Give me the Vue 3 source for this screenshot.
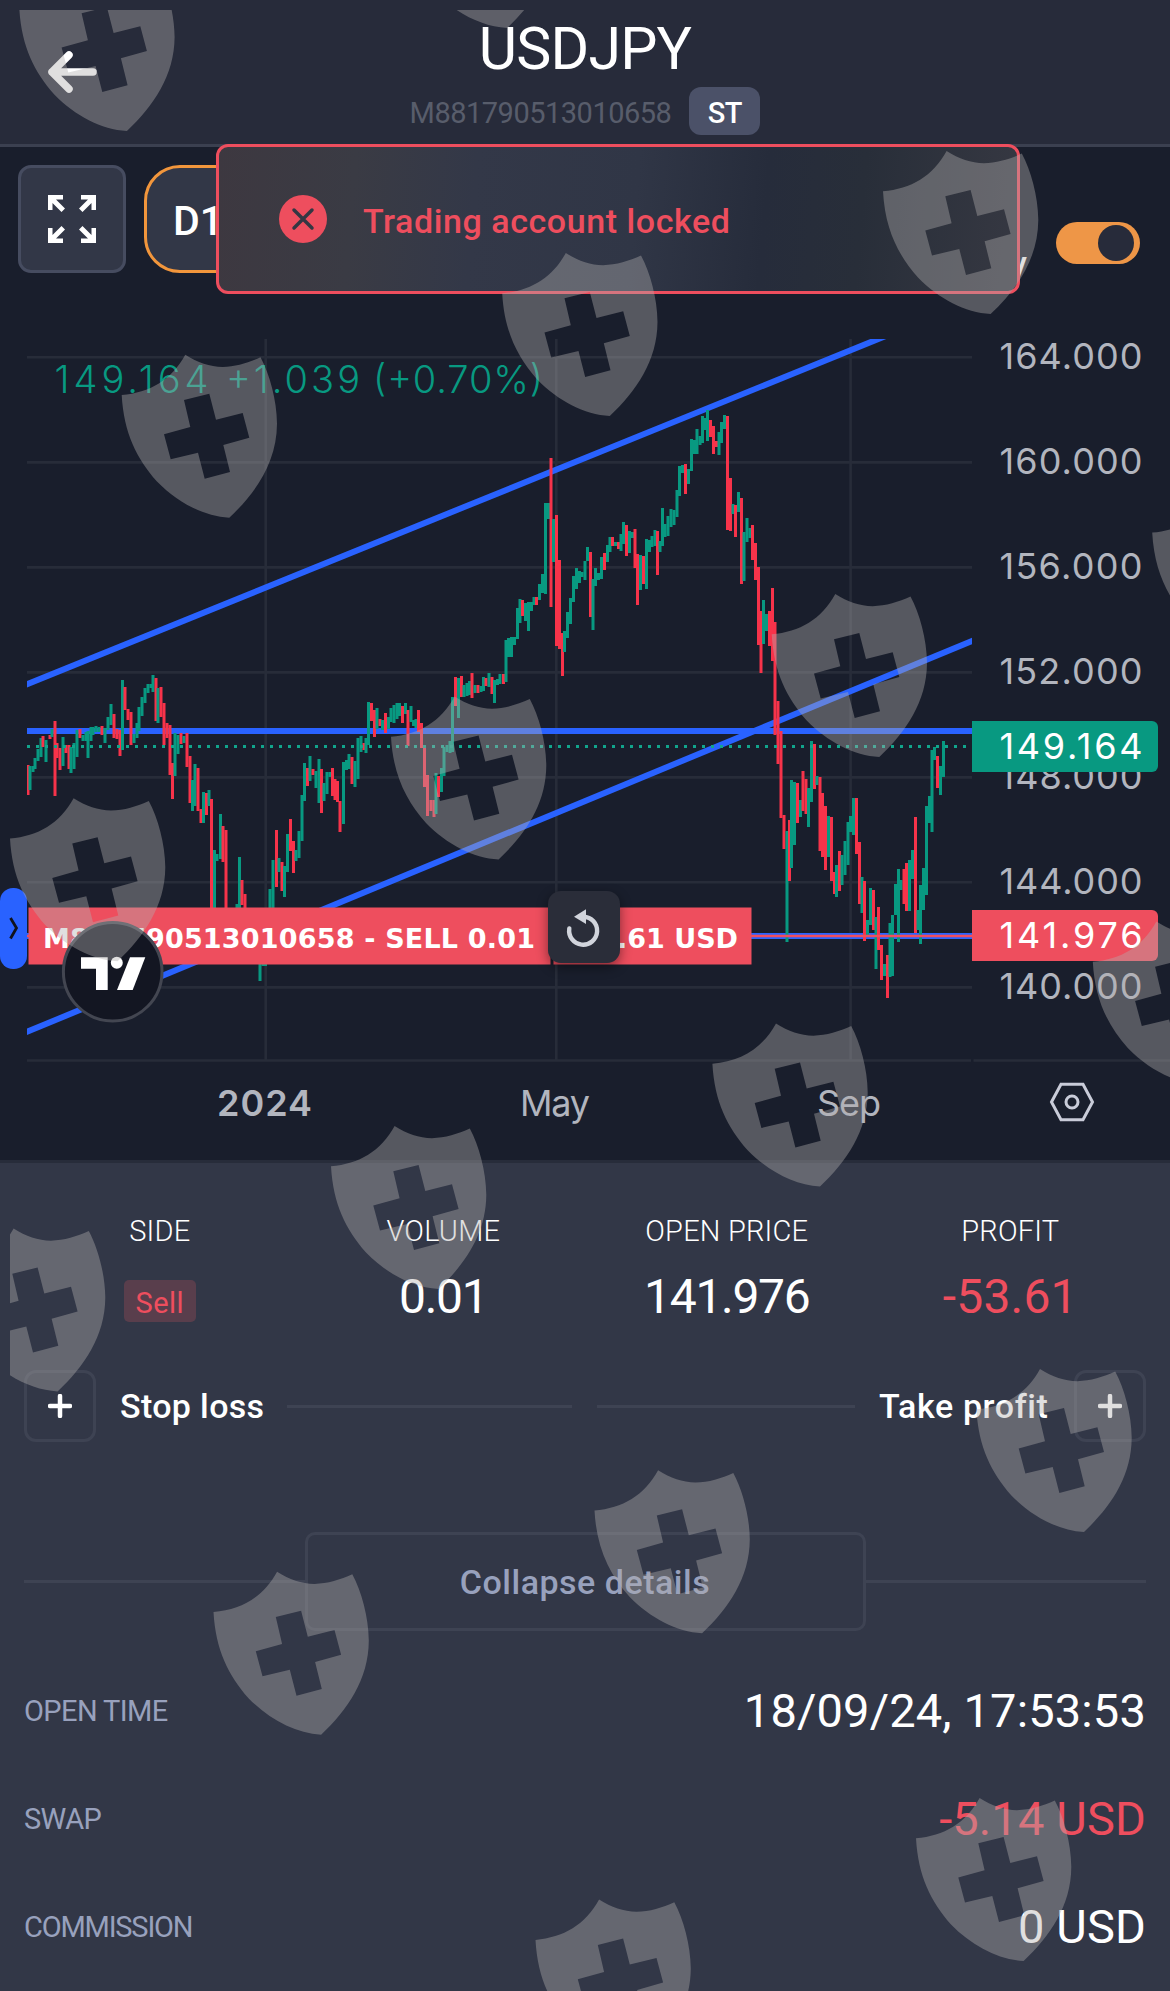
<template>
  <div class="screen">
    <header class="header">
      <svg class="back" width="56" height="48" viewBox="0 0 56 48">
        <path d="M25 7 L8 24 L25 41 M8 24 H49" />
      </svg>
      <h1 class="symbol">{{ position.symbol }}</h1>
      <div class="account">
        <span class="account-id">{{ position.account }}</span>
        <span class="account-type">ST</span>
      </div>
    </header>

    <div class="toolbar">
      <button class="btn-full">
        <svg width="48" height="48" viewBox="0 0 48 48">
          <g v-for="angle in [0, 90, 180, 270]" :key="angle" :transform="`rotate(${angle} 24 24)`">
            <path d="M0 0 H15 V4.5 H8 L17 13.5 L13.5 17 L4.5 8 V15 H0 Z" />
          </g>
        </svg>
      </button>
      <button class="btn-period">D1</button>
      <div class="history">
        <span class="history-label">y</span>
        <span class="toggle"><span class="knob"></span></span>
      </div>
    </div>

    <div class="toast">
      <svg width="48" height="48" viewBox="0 0 48 48">
        <circle cx="24" cy="24" r="24" fill="#ee4e5e" />
        <path d="M15 15 L33 33 M33 15 L15 33" stroke="#343743" stroke-width="3.5" stroke-linecap="round" />
      </svg>
      <span class="toast-text">Trading account locked</span>
    </div>

    <svg class="chart" width="1170" height="840" viewBox="0 320 1170 840">
      <g class="grid">
        <line v-for="t in ticks" :key="t.label" x1="27" x2="972" :y1="t.y" :y2="t.y" />
        <line v-for="m in months" :key="m.label" :x1="m.x" :x2="m.x" y1="339" y2="1060" />
        <line x1="27" x2="971" y1="1060.5" y2="1060.5" />
        <line x1="973.5" x2="1170" y1="1060.5" y2="1060.5" />
      </g>

      <clipPath id="pane"><rect x="27" y="339" width="945" height="721" /></clipPath>
      <g clip-path="url(#pane)">
        <g class="trend">
          <line x1="20" y1="687.2" x2="900" y2="330.2" />
          <line x1="20" y1="1034.7" x2="980" y2="637.7" />
          <line x1="27" y1="731" x2="972" y2="731" />
          <line x1="27" y1="936" x2="972" y2="936" />
        </g>
        <rect
          v-for="(c, i) in candles"
          :key="i"
          :x="c.x - 1.5"
          :y="c.top"
          width="3"
          :height="c.bottom - c.top"
          :fill="c.up ? '#089981' : '#f7334a'"
        />
        <line x1="27" y1="746.5" x2="972" y2="746.5" stroke="#11a58c" stroke-width="3" stroke-dasharray="3 6" />
        <line x1="27" y1="936" x2="972" y2="936" stroke="#ee4e5e" stroke-width="2.6" />
      </g>

      <g class="quote">
        <text x="54.5" y="392.7" textLength="154">149.164</text>
        <text x="226" y="392.7" textLength="134">+1.039</text>
        <text x="373" y="392.7" textLength="170">(+0.70%)</text>
      </g>

      <g class="axis">
        <text v-for="t in ticks" :key="t.label" x="999.5" :y="t.y + 12" textLength="143">{{ t.label }}</text>
        <text v-for="m in months" :key="m.label" :x="m.from" y="1116" :textLength="m.width" :class="{ year: m.year }">{{ m.label }}</text>
      </g>

      <path d="M972 721 H1152 a6 6 0 0 1 6 6 V766 a6 6 0 0 1 -6 6 H972 Z" fill="#089981" />
      <path d="M972 910 H1152 a6 6 0 0 1 6 6 V955 a6 6 0 0 1 -6 6 H972 Z" fill="#ee4e5e" />
      <text class="tag" x="999.5" y="759.3" textLength="143">149.164</text>
      <text class="tag" x="999.5" y="948.3" textLength="143">{{ position.openPrice }}</text>

      <!-- open position line -->
      <rect x="28.5" y="907.5" width="522" height="57" fill="#ee4e5e" />
      <rect x="553.5" y="907.5" width="198" height="57" fill="#ee4e5e" />
      <text class="order" x="43" y="947.5" textLength="492">{{ position.account }} - SELL 0.01</text>
      <text class="order" x="738" y="947.5" text-anchor="end">-53.61 USD</text>

      <!-- drawer handle -->
      <rect x="0" y="888" width="27" height="81" rx="13" fill="#2962ff" />
      <path d="M10.5 918 L16.5 928 L10.5 938.5" fill="none" stroke="#10131c" stroke-width="2.8" />

      <!-- TradingView badge -->
      <circle cx="112.7" cy="971.7" r="49.3" fill="#131622" stroke="#434651" stroke-width="3" />
      <g fill="#fff">
        <path d="M81 957.3 H107.7 V990 H96 V968.7 H81 Z" />
        <circle cx="116.8" cy="962.8" r="6" />
        <path d="M130 957.3 H145.3 L132.7 990 H117 Z" />
      </g>

      <rect class="reset" x="548" y="891" width="72" height="72" rx="13" />
      <path d="M569.3 928.5 A14 14 0 1 0 583.5 916.7" fill="none" stroke="#d1d4dc" stroke-width="4.4" stroke-linecap="round" />
      <path d="M574 916.7 L586 909.3 V924 Z" fill="#d1d4dc" />

      <g fill="none" stroke="#c9ccd9" stroke-width="3">
        <path d="M1051.5 1102 L1061 1084.3 H1083 L1092.500 1102 L1083 1119.700 H1061 Z" />
        <circle cx="1072" cy="1102" r="6" />
      </g>
    </svg>

    <section class="panel">
      <div class="summary">
        <div class="cell">
          <span class="cell-label">SIDE</span>
          <span class="side">Sell</span>
        </div>
        <div class="cell">
          <span class="cell-label">VOLUME</span>
          <span class="cell-value">0.01</span>
        </div>
        <div class="cell">
          <span class="cell-label">OPEN PRICE</span>
          <span class="cell-value">{{ position.openPrice }}</span>
        </div>
        <div class="cell">
          <span class="cell-label">PROFIT</span>
          <span class="cell-value loss">-53.61</span>
        </div>
      </div>

      <div class="limits">
        <button class="btn-add">
          <svg width="24" height="24" viewBox="0 0 24 24"><path d="M12 2 V22 M2 12 H22" /></svg>
        </button>
        <span class="limit-text stop">Stop loss</span>
        <span class="rule rule-stop"></span>
        <span class="rule rule-take"></span>
        <span class="limit-text take">Take profit</span>
        <button class="btn-add">
          <svg width="24" height="24" viewBox="0 0 24 24"><path d="M12 2 V22 M2 12 H22" /></svg>
        </button>
      </div>

      <div class="collapse">
        <span class="rule"></span>
        <button class="btn-collapse">Collapse details</button>
        <span class="rule"></span>
      </div>

      <div v-for="row in details" :key="row.label" class="row">
        <span class="row-label" :class="row.label.toLowerCase().replace(' ', '-')">{{ row.label }}</span>
        <span class="row-value" :class="{ loss: row.loss }">{{ row.value }}</span>
      </div>
    </section>

    <svg class="watermark" width="1170" height="1991" viewBox="0 0 1170 1991">
      <clipPath id="watermark-area"><rect x="10" y="10" width="1160" height="1981" /></clipPath>
      <g clip-path="url(#watermark-area)">
        <path
          v-for="(s, i) in shields"
          :key="i"
          :transform="`translate(${s[0]} ${s[1]})`"
          fill-rule="evenodd"
          :d="shieldPath"
        />
      </g>
    </svg>
  </div>
</template>

<script setup>
const position = {
  symbol: 'USDJPY',
  account: 'M881790513010658',
  openPrice: '141.976',
};

const details = [
  { label: 'OPEN TIME', value: '18/09/24, 17:53:53' },
  { label: 'SWAP', value: '-5.14 USD', loss: true },
  { label: 'COMMISSION', value: '0 USD' },
];

const ticks = [
  { label: '164.000', y: 357.3 },
  { label: '160.000', y: 462.4 },
  { label: '156.000', y: 567.4 },
  { label: '152.000', y: 672.4 },
  { label: '148.000', y: 777.4 },
  { label: '144.000', y: 882.3 },
  { label: '140.000', y: 987.4 },
];

const months = [
  { label: '2024', x: 265.7, from: 217, width: 95, year: true },
  { label: 'May', x: 556.3, from: 520, width: 70 },
  { label: 'Sep', x: 850.6, from: 817, width: 64 },
];

// direction, x, high, low
const series = `
r 28 765 795,g 30 766 790,g 33 766 772,g 35 758 769,g 38 749 761,g 41 738 757,r 43 736 747,g 46 740 762,r 50 735 739,g 52 729 737,
r 55 721 796,r 57 743 758,r 60 748 770,g 63 737 766,r 66 745 753,r 69 745 769,g 71 747 773,g 74 743 769,g 77 730 757,r 80 729 738,
g 83 735 741,g 86 732 741,g 88 731 758,g 91 727 741,g 93 727 735,g 96 726 732,g 99 727 732,r 102 726 735,g 105 728 743,g 108 717 730,
g 111 704 725,r 114 714 738,r 117 729 739,r 120 730 756,g 122.5 680 750,r 125 687 710,r 128 709 720,r 131 712 745,g 134 734 743,
g 137 723 738,g 139 707 731,g 142 697 716,g 145 688 703,g 148 684 693,g 151 684 688,g 153 675 692,r 156 678 721,g 158 688 723,
r 161 687 717,r 164 703 745,r 167 723 738,r 170 725 775,r 172.5 763 799,g 175 733 776,g 178 735 754,r 181 733 744,g 184 736 743,
r 187 733 767,r 190 756 803,g 192.5 780 811,g 195 764 806,r 198 768 811,r 201 809 823,g 203.5 792 823,r 206.5 793 815,g 209 790 806,
r 211.5 799 910,g 214.5 850 935,g 217 854 861,g 220.5 814 859,r 223 826 862,r 226 830 925,g 237 904 930,g 239.5 857 930,r 242 880 905,
r 245 894 930,g 260 960 981,g 263 950 966,g 265.5 930 966,g 270 889 920,g 273 860 909,r 276.5 830 887,g 279 858 872,r 282 862 891,
g 284.5 866 897,g 287.5 834 872,r 290.5 819 851,r 293.5 841 873,g 296 850 861,g 299 831 858,g 302 795 841,g 304.5 763 801,
r 307.5 768 786,g 310 756 781,r 313 769 775,g 316 771 788,g 319 759 803,r 321.5 769 813,g 324 783 801,g 327 772 794,g 330 772 777,
r 332.5 768 796,r 335 779 800,r 337.5 781 802,r 340 801 832,g 343.5 762 824,g 346.5 760 770,g 349 754 769,r 352 757 784,g 355 761 787,
g 358 738 779,g 361 736 752,r 364 743 750,g 366 738 753,g 368.5 702 745,r 371.5 703 721,r 374.5 710 737,g 377 708 729,r 380 719 726,
g 382.5 720 730,r 385.5 713 733,g 388.5 717 729,g 391 708 722,g 394 705 723,g 397 703 719,g 399.5 703 716,r 402.5 706 723,
g 405.5 703 714,r 408 710 746,g 411 706 722,g 413.5 720 726,g 416 719 728,r 418.5 710 732,r 421.5 723 748,r 424.5 746 787,
r 427.5 775 816,r 431 800 811,r 434 800 817,g 436 773 814,r 438.5 776 797,g 441.5 768 792,g 444 747 776,g 447 745 752,g 450 741 753,
g 452.5 697 752,r 455.5 677 706,g 458.5 678 718,r 461.5 676 697,g 464 685 697,g 467 683 696,g 469.5 681 695,r 472 673 698,
g 475 685 693,r 478 685 693,g 481 686 692,g 483.5 677 691,r 486 678 686,g 489 673 687,r 492 677 694,g 494.5 680 703,g 497.5 679 685,
g 500 674 684,r 503.5 674 684,g 506 640 682,g 508.5 638 657,g 511.5 637 657,g 514.5 637 645,g 517.5 608 639,g 520 599 623,
r 522.5 600 616,g 525.5 603 621,g 528.5 602 631,g 531.5 602 611,g 534 597 605,r 536.5 597 605,g 539.5 584 600,g 542.5 574 593,
g 545.5 503 594,g 548.5 503 519,r 551 458 607,g 553.5 519 562,r 556.5 515 646,r 559.5 560 649,r 562.5 633 676,g 564.5 631 652,
g 567.5 612 638,g 570.5 598 624,g 573.5 576 602,g 576.5 568 589,g 579.5 571 583,g 582 572 577,g 585 561 580,g 587.5 547 561,
r 590.5 552 617,g 593 579 630,g 595.5 568 586,g 598.5 573 580,g 601.5 557 579,r 604.5 553 570,g 607.5 545 562,g 610 537 552,
r 612.5 537 546,g 615.5 542 546,r 618.5 542 549,g 621 534 551,g 623.5 522 544,r 626.5 525 556,g 629.5 531 553,g 632.5 532 538,
r 635 529 568,r 637.5 554 605,g 640.5 555 590,r 643.5 556 584,g 646.5 539 589,g 649.5 540 552,g 652 536 547,g 655 530 546,
r 657.5 531 575,g 660 541 552,g 662.5 508 546,g 665 524 537,g 668 516 536,g 671 509 527,g 674 510 525,g 677 490 517,
g 679.5 466 496,g 682.5 465 473,r 685.5 464 494,g 688.5 469 484,g 691.5 439 471,g 694.5 440 454,g 697 429 454,g 700 436 445,
g 702.5 416 443,g 705 418 430,g 707.5 410 441,r 710.5 420 437,r 713.5 426 454,r 716.5 441 447,g 719 432 455,g 721.5 422 443,
g 724.5 415 429,r 727.5 416 530,r 730.5 478 531,g 733 504 514,r 735.5 505 537,g 738.5 492 512,r 741.5 498 584,g 744 532 581,
g 747 518 542,g 750 528 538,r 752.5 525 560,r 755.5 543 580,r 758.5 567 645,r 761 611 673,g 763.5 600 644,g 766.5 614 631,
r 769.5 611 646,r 772.5 588 661,r 775 622 735,r 778 701 764,r 781 731 818,r 784 815 849,g 787 831 942,r 789.5 820 881,
g 791.5 780 868,g 794.5 782 845,r 797.5 783 823,g 800.5 800 817,r 803 771 811,r 806 779 814,g 808.5 788 827,g 811.5 741 802,
r 814.5 744 789,g 817 776 785,r 820 777 851,r 822.5 793 857,r 825.5 806 870,g 828.5 816 857,r 831.5 817 881,r 834.5 872 894,
g 836.5 865 897,r 839.5 851 891,g 842 855 885,g 845 841 875,g 848 822 865,g 850.5 816 832,g 853.5 798 835,r 856.5 798 854,
r 859.5 842 904,g 862 877 913,r 864.5 881 941,g 867.5 920 935,g 870.5 888 925,r 873.5 890 930,g 876 917 969,r 878.5 907 950,
r 881.5 945 980,g 884.5 964 976,r 887.5 955 998,g 890 923 977,g 892.5 915 976,g 895.5 884 915,g 898.5 869 942,g 901 880 890,
r 904 869 904,r 906.5 863 911,g 909.5 860 911,g 912.5 850 879,r 915.5 817 933,g 918 910 930,g 920.5 885 944,g 923.5 868 910,
g 926.5 806 895,g 929.5 796 823,g 932 750 832,g 934.5 747 760,r 937.5 756 788,g 940.5 766 795,g 943.5 741 777`;

const candles = series.split(',').map((item) => {
  const [dir, x, top, bottom] = item.trim().split(' ');
  return { up: dir === 'g', x: +x, top: +top, bottom: +bottom };
});

const shieldPath =
  'M0 40.3 C28 38 50 25 63.6 0 C76 8 88 12 101 12.2 C114 12 127 8 138.8 2.6 C148 20 155 45 155.3 69 ' +
  'C155 108 134 138 107.6 163 C82 161.5 56 148 35 126.5 C15 104 2 78 0 40.3 Z ' +
  'M62.3 45.3 L87.6 39 L94.3 65 L121 58.3 L127.6 83 L101.6 90.3 L108.3 117.3 L83 124 ' +
  'L76.3 98 L49 104.5 L42.3 79.6 L68.6 72.3 Z';

const shields = [
  [19.3, -32], [399.5, -135],
  [883, 151], [502.2, 253], [121.7, 354.7],
  [1152.2, 492.3], [771.7, 594], [391, 696.5], [10, 798.3],
  [1092.8, 921.5], [712.4, 1023.5], [331, 1126], [-50, 1228.5],
  [976.4, 1369], [594.5, 1470.3], [213.5, 1571.7],
  [916, 1798], [535.5, 1899.6],
];
</script>

<style>
  body {
    background: #323747;
  }
</style>

<style scoped>
  .screen {
    position: relative;
    width: 1170px;
    height: 1991px;
    overflow: hidden;
    background: #191e2c;
    color: #fff;
    font-family: Roboto, "Liberation Sans", sans-serif;
  }

  button {
    margin: 0;
    padding: 0;
    color: #fff;
    font-family: inherit;
  }

  .header {
    position: relative;
    box-sizing: border-box;
    height: 147px;
    padding-top: 19px;
    background: #272b3a;
    border-bottom: 3px solid #3b4050;
  }

  .back {
    position: absolute;
    left: 44px;
    top: 48px;
    fill: none;
    stroke: #fff;
    stroke-width: 7.5;
    stroke-linecap: round;
    stroke-linejoin: round;
  }

  .symbol {
    margin: 0;
    font-size: 59px;
    font-weight: 400;
    line-height: 59px;
    letter-spacing: -0.8px;
    text-align: center;
  }

  .account {
    display: flex;
    justify-content: center;
    gap: 18px;
    margin-top: 9px;
    line-height: 52px;
    font-size: 29px;
  }

  .account-id {
    color: #585d6b;
    letter-spacing: -0.5px;
  }

  .account-type {
    width: 71px;
    height: 48px;
    border-radius: 12px;
    background: #4b5168;
    font-weight: 500;
    letter-spacing: -0.5px;
    text-align: center;
  }

  .toolbar {
    display: flex;
    align-items: flex-start;
    box-sizing: border-box;
    height: 173px;
    padding: 18px 30px 0 18px;
  }

  .btn-full {
    display: flex;
    align-items: center;
    justify-content: center;
    width: 108px;
    height: 108px;
    border: 3px solid #464c60;
    border-radius: 13px;
    background: #323747;
    fill: #fff;
  }

  .btn-period {
    width: 108px;
    height: 108px;
    margin-left: 18px;
    border: 3px solid #f2963c;
    border-radius: 36px;
    background: #323747;
    font-size: 41px;
    font-weight: 500;
    line-height: 106px;
  }

  .history {
    display: flex;
    margin-left: auto;
    padding-top: 57px;
  }

  .history-label {
    margin-right: 29px;
    font-size: 34px;
    font-weight: 500;
    line-height: 82px;
    height: 42px;
  }

  .toggle {
    display: flex;
    justify-content: flex-end;
    box-sizing: border-box;
    width: 84px;
    height: 42px;
    padding: 3px 6px;
    border-radius: 21px;
    background: #ee9647;
  }

  .knob {
    width: 36px;
    height: 36px;
    border-radius: 50%;
    background: #272b3a;
  }

  .toast {
    position: absolute;
    left: 216px;
    top: 144px;
    display: flex;
    align-items: center;
    gap: 36px;
    box-sizing: border-box;
    width: 804px;
    height: 150px;
    padding-left: 60px;
    border: 3px solid #ee4e5e;
    border-radius: 12px;
    background: linear-gradient(95deg, #3d3840 0%, #3a3b44 17%, #333848 32%, #303646 52%, #262c3b 68%, #282e39 80%, #363842 100%);
  }

  .toast-text {
    padding-top: 3px;
    color: #ee4e5e;
    font-size: 34px;
    font-weight: 500;
    letter-spacing: 0.57px;
  }

  .chart {
    display: block;
  }

  .chart text {
    font-family: Inter, "Liberation Sans", sans-serif;
    font-size: 36px;
  }

  .grid line {
    stroke: #272c39;
    stroke-width: 2.6;
  }

  .trend line {
    stroke: #2962ff;
    stroke-width: 6;
  }

  .chart .quote text {
    fill: #089981;
    font-size: 38px;
    font-weight: 300;
  }

  .axis {
    fill: #b2b5be;
  }

  .axis .year {
    font-weight: 600;
  }

  .tag {
    fill: #fff;
  }

  .chart .order {
    fill: #fff;
    font-family: "DejaVu Sans", sans-serif;
    font-size: 27px;
    font-weight: 700;
  }

  .reset {
    fill: #2a2d39;
    filter: drop-shadow(0 4px 6px rgba(0, 0, 0, 0.45));
  }

  .panel {
    box-sizing: border-box;
    height: 831px;
    padding-top: 50px;
    border-top: 3px solid #272c3a;
    background: #323747;
  }

  .summary {
    display: grid;
    grid-template-columns: repeat(4, 1fr);
    padding: 0 18px;
  }

  .cell {
    display: flex;
    flex-direction: column;
    align-items: center;
  }

  .cell-label {
    font-size: 29px;
    font-weight: 300;
    line-height: 36px;
    letter-spacing: 0.2px;
  }

  .cell-value {
    margin-top: 20px;
    font-size: 48px;
    line-height: 56px;
    letter-spacing: -1.3px;
  }

  .cell-value.loss {
    letter-spacing: 0.2px;
  }

  .loss {
    color: #ee4e5e;
  }

  .side {
    width: 72px;
    height: 42px;
    margin-top: 31px;
    border-radius: 5px;
    background: #593e4c;
    color: #ee4e5e;
    font-size: 29px;
    line-height: 47px;
    letter-spacing: 0.4px;
    text-align: center;
  }

  .limits {
    display: flex;
    align-items: center;
    padding: 0 24px;
    margin-top: 45px;
  }

  .btn-add {
    display: flex;
    align-items: center;
    justify-content: center;
    box-sizing: border-box;
    width: 72px;
    height: 72px;
    border: 3px solid #3e4353;
    border-radius: 12px;
    background: none;
  }

  .btn-add path {
    stroke: #fff;
    stroke-width: 4.5;
    stroke-linecap: round;
  }

  .limit-text {
    font-size: 34px;
    font-weight: 500;
  }

  .stop {
    width: 167px;
    margin-left: 24px;
    letter-spacing: 0.35px;
  }

  .take {
    width: 171px;
    margin: 0 24px 0 24px;
    letter-spacing: 0.6px;
    white-space: nowrap;
  }

  .rule {
    flex: 1;
    height: 3px;
    background: #3e4353;
  }

  .rule-stop {
    flex: 0 0 285px;
    margin-right: 25px;
  }

  .collapse {
    display: flex;
    align-items: center;
    padding: 0 24px;
    margin-top: 90px;
  }

  .btn-collapse {
    box-sizing: border-box;
    width: 561px;
    height: 99px;
    padding-top: 1px;
    border: 3px solid #3e4353;
    border-radius: 10px;
    background: none;
    color: #98a1bd;
    font-size: 34px;
    font-weight: 500;
    letter-spacing: 0.5px;
  }

  .row {
    display: flex;
    align-items: center;
    justify-content: space-between;
    height: 108px;
    padding: 0 24px;
  }

  .collapse + .row {
    margin-top: 26px;
  }

  .row-label {
    color: #98a1bd;
    font-size: 29px;
  }

  .row-label.open-time {
    letter-spacing: -0.6px;
  }

  .row-label.swap {
    letter-spacing: -0.6px;
  }

  .row-label.commission {
    letter-spacing: -1.2px;
  }

  .row-value {
    padding-bottom: 2px;
    font-size: 47px;
    letter-spacing: 0.15px;
  }

  .watermark {
    position: absolute;
    left: 0;
    top: 0;
    fill: #b1b0af;
    fill-opacity: 0.4;
    pointer-events: none;
  }
</style>
